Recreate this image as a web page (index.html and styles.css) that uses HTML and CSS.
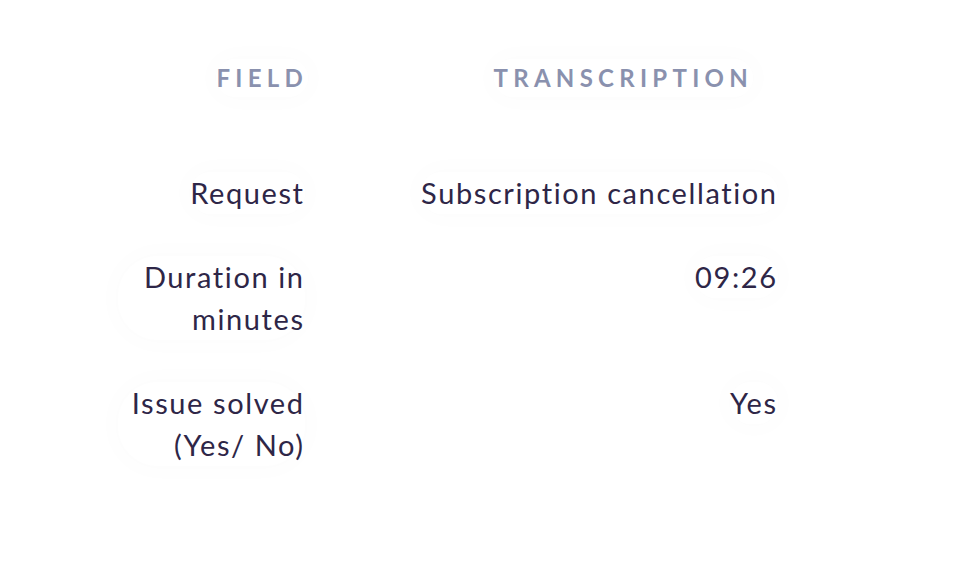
FILE: index.html
```html
<!DOCTYPE html>
<html lang="en">
<head>
<meta charset="utf-8">
<title>Call transcription</title>
<link rel="stylesheet" href="styles.css">
</head>
<body>
<main class="page">
  <div class="table">
    <div class="cell head head-field"><span class="pill">Field</span></div>
    <div class="cell head head-value"><span class="pill">Transcription</span></div>

    <div class="cell label"><span class="pill">Request</span></div>
    <div class="cell value"><span class="pill">Subscription cancellation</span></div>

    <div class="cell label"><span class="pill">Duration in minutes</span></div>
    <div class="cell value"><span class="pill">09:26</span></div>

    <div class="cell label"><span class="pill">Issue solved (Yes/ No)</span></div>
    <div class="cell value"><span class="pill">Yes</span></div>
  </div>
</main>
</body>
</html>
```

FILE: styles.css
```css
html, body {
  margin: 0;
  padding: 0;
  background: #ffffff;
}

body {
  width: 960px;
  height: 570px;
  overflow: hidden;
  font-family: "Lato", "Noto Sans", sans-serif;
  color: #2e2647;
}

.page {
  padding-top: 59px;
  padding-left: 118px;
}

.table {
  display: grid;
  grid-template-columns: 185px 357px;
  column-gap: 116px;
  align-items: start;
}

.cell {
  text-align: right;
}

.pill {
  display: inline-block;
  border-radius: 40px;
  box-shadow: 0 0 22px 8px rgba(60, 60, 120, 0.012);
}

.head {
  font-size: 24px;
  font-weight: 700;
  letter-spacing: 0.22em;
  text-transform: uppercase;
  color: #8a91ae;
  line-height: 38px;
  padding-bottom: 75px;
}

.head-field {
  margin-right: -5px;
}

.head-value {
  margin-right: 23px;
}

.label,
.value {
  font-size: 29px;
  letter-spacing: 1.6px;
  line-height: 42px;
  padding-bottom: 42px;
}

.label .pill,
.value .pill {
  margin-right: -1.6px;
}
```
